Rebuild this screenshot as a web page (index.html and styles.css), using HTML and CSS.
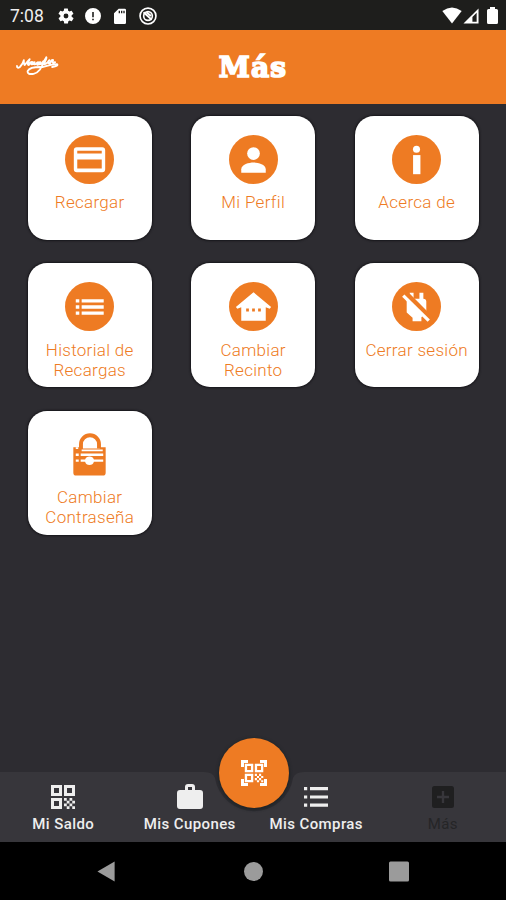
FILE: index.html
```html
<!DOCTYPE html>
<html lang="es">
<head>
<meta charset="utf-8">
<title>Más</title>
<link rel="stylesheet" href="styles.css">
</head>
<body>
<div class="phone">
  <div class="status">
    <span class="time">7:08</span>
    <svg class="s-icon" viewBox="1.500 1.500 21 21"><path fill-rule="evenodd" d="M19.4 13a7.500 7.500 0 0 0 0-2l2.100-1.600a.5.5 0 0 0 .1-.6l-2-3.500a.5.5 0 0 0-.6-.2l-2.500 1a7 7 0 0 0-1.700-1L14.500 2.400a.5.5 0 0 0-.5-.4h-4a.5.5 0 0 0-.5.4l-.4 2.700a7 7 0 0 0-1.700 1l-2.500-1a.5.5 0 0 0-.6.2l-2 3.500a.5.5 0 0 0 .1.6L4.600 11a7.500 7.500 0 0 0 0 2l-2.100 1.600a.5.5 0 0 0-.1.6l2 3.500c.1.200.4.300.6.200l2.500-1a7 7 0 0 0 1.700 1l.4 2.700c0 .2.200.4.500.4h4c.2 0 .5-.2.500-.4l.4-2.700a7 7 0 0 0 1.700-1l2.500 1c.2.100.5 0 .6-.2l2-3.500a.5.5 0 0 0-.1-.6zM12 15.200a3.200 3.200 0 1 1 0-6.400 3.200 3.200 0 0 1 0 6.400z"/></svg>
    <svg class="s-icon" viewBox="0 0 24 24"><path fill-rule="evenodd" d="M12 0a12 12 0 1 0 0 24 12 12 0 0 0 0-24zM10.800 6h2.400v8h-2.400zm0 10h2.400v2.400h-2.400z"/></svg>
    <svg class="s-icon" viewBox="0 0 24 24"><path fill-rule="evenodd" d="M21 1H10L3 8v14q0 2 2 2h14q2 0 2-2V3q0-2-2-2zM10 4h2v4h-2zm3.500 0h2v4h-2zM17 4h2v4h-2z"/></svg>
    <svg class="s-icon wide" viewBox="0 0 24 24" fill="none" stroke="#fff"><circle cx="12" cy="12" r="10.600" stroke-width="2.200"/><circle cx="12" cy="12" r="5.800" stroke-width="2.200"/><path d="M6 7l11 10M10 7l6 5" stroke-width="2.400"/></svg>
    <span class="spacer"></span>
    <svg class="wifi" viewBox="0 0 20 17"><path d="M.3 4Q10-3.200 19.700 4L10 16.500z"/></svg>
    <svg class="signal" viewBox="0 0 17 17"><path fill-rule="evenodd" d="M.5 16.500L16.500.5v16zM10 9.500v5h4.500V5z"/></svg>
    <svg class="battery" viewBox="0 0 11 17"><path d="M3 0h5v2h1.500Q11 2 11 3.500v12q0 1.500-1.500 1.500h-8Q0 17 0 15.500v-12Q0 2 1.500 2H3z"/></svg>
  </div>

  <header class="header">
    <svg class="brand" viewBox="0 0 44 22"><path d="M1 10Q1 13 4 11Q7 8 8 4Q8 9 9 9Q12 5 14 3Q11 9 13 9Q15 5 17 6Q14 9 17 8L19 6Q17 9 20 8Q24 4 22 8Q21 10 25 7M25 6Q21 6 23 8Q26 9 28 5Q26 16 18 18Q11 19 12 15Q14 11 25 11M28 8Q32 2 31 1Q28 5 29 8Q32 8 34 4Q32 8 35 7Q36 3 38 4Q36 8 40 6M27 11Q37 8 42 8Q44 10 37 11"/></svg>
    <h1>Más</h1>
  </header>

  <main class="grid">
    <section class="card">
      <svg class="icon" viewBox="0 0 50 50"><circle class="disc" cx="25" cy="25" r="25"/><path class="w" fill-rule="evenodd" d="M12 12.500h26q3 0 3 3v19.500q0 3-3 3H12q-3 0-3-3V15.500q0-3 3-3zM12.500 16v3h25v-3zm0 9v9.300h25V25z"/></svg>
      <p>Recargar</p>
    </section>
    <section class="card">
      <svg class="icon" viewBox="0 0 50 50"><circle class="disc" cx="25" cy="25" r="25"/><circle class="w" cx="25" cy="19" r="6.500"/><path class="w" d="M12.500 38.500v-3.600C12.500 30 20.500 28 25 28s12.500 2 12.500 6.900v3.600z"/></svg>
      <p>Mi Perfil</p>
    </section>
    <section class="card">
      <svg class="icon" viewBox="0 0 50 50"><circle class="disc" cx="25" cy="25" r="25"/><circle class="w" cx="25" cy="14.500" r="3.600"/><path class="w" d="M21.500 20.500h7.500v19.500h-7.500z"/></svg>
      <p>Acerca de</p>
    </section>
    <section class="card">
      <svg class="icon" viewBox="0 0 50 50"><circle class="disc" cx="25" cy="25" r="25"/><path class="w" d="M11 17.500h3.600v3.500H11zm6 0h22.500v3.500H17zM11 23.700h3.600v3.500H11zm6 0h22.500v3.500H17zM11 30h3.600v3.500H11zm6 0h22.500v3.500H17z"/></svg>
      <p>Historial de Recargas</p>
    </section>
    <section class="card">
      <svg class="icon" viewBox="0 0 50 50"><circle class="disc" cx="25" cy="25" r="25"/><path class="w" d="M25 10.500L43 25.500l-1.500 1.700-4-1.500V39.500h-25V25.700l-4 1.500L7 25.500z"/><path class="o" d="M17.500 27h2.800v3h-2.800zm6.100 0h2.800v3h-2.800zm6.100 0h2.800v3h-2.800z"/></svg>
      <p>Cambiar Recinto</p>
    </section>
    <section class="card">
      <svg class="icon" viewBox="0 0 50 50"><circle class="disc" cx="25" cy="25" r="25"/><path class="w" d="M18 11h4v6h6v-6h4v6q3 0 3 3v11l-5 5V40h-9v-3.500L15 31V18h3z"/><path d="M14 12L40 38" stroke="#ee7b23" stroke-width="6"/><path d="M11.500 14L37.500 39.500" stroke="#fff" stroke-width="3.300"/></svg>
      <p>Cerrar sesión</p>
    </section>
    <section class="card">
      <svg class="icon" viewBox="0 0 50 50"><path d="M16.300 21V14.500a9.200 9.200 0 0 1 18.400 0V19" fill="none" stroke="#ee7b23" stroke-width="4"/><path class="o" d="M8.500 17.500h6V19h21v-1.500h6V43.500q0 3-3 3h-27q-3 0-3-3z"/><path class="w" d="M11 17.500h2.500v2H11zm6 2.300h21.500v2H17zM11 24h3v2.500h-3zm5 0h23v2.500H16zM11 30h3v2.500h-3zm5 0h4.500q1-3 4.500-3t4.500 3H39v2.500h-9.500q-1 3.300-4.500 3.300t-4.500-3.300H16z"/></svg>
      <p>Cambiar Contraseña</p>
    </section>
  </main>

  <nav class="nav">
    <svg class="nav-bg" viewBox="0 0 506 70"><path d="M0 0H204Q213 0 215 6A39.500 39.500 0 0 0 293 6Q295 0 304 0H506V70H0z"/></svg>
    <a class="tab">
      <svg viewBox="0 0 24 24"><g id="qr"><path fill-rule="evenodd" d="M0 0h11v11H0zm3 3v5h5V3zM13 0h11v11H13zm3 3v5h5V3zM0 13h11v11H0zm3 3v5h5v-5z"/><path d="M13 13h2.750v2.750H13zm5.500 0h2.750v2.750H18.500zm-2.750 2.750h2.750v2.750h-2.750zm5.500 0H24v2.750h-2.750zM13 18.500h2.750v2.750H13zm5.500 0h2.750v2.750H18.500zm-2.750 2.750h2.750V24h-2.750zm5.500 0H24V24h-2.750z"/></g></svg>
      <span>Mi Saldo</span>
    </a>
    <a class="tab">
      <svg class="bag" viewBox="0 0 26 26"><path fill-rule="evenodd" d="M8 6V3q0-3 3-3h4q3 0 3 3v3h5q3 0 3 3v13q0 3-3 3H3q-3 0-3-3V9q0-3 3-3zm3 0h4V3h-4z"/></svg>
      <span>Mis Cupones</span>
    </a>
    <a class="tab">
      <svg viewBox="0 0 24 24"><path d="M0 2h3.200v3.200H0zm6 0h18v3.200H6zM0 10.400h3.200v3.200H0zm6 0h18v3.200H6zM0 18.500h3.200v3.200H0zm6 0h18v3.200H6z"/></svg>
      <span>Mis Compras</span>
    </a>
    <a class="tab active">
      <svg viewBox="0 0 24 24"><path fill-rule="evenodd" d="M3.500 1h17q2.500 0 2.500 2.500v17q0 2.500-2.500 2.500h-17Q1 23 1 20.500v-17Q1 1 3.500 1zM10.800 6v4.800H6v2.400h4.800V18h2.400v-4.800H18v-2.400h-4.800V6z"/></svg>
      <span>Más</span>
    </a>
    <div class="fab"><svg viewBox="0 0 26 26"><path d="M0 0h7v3H3v4H0zM19 0h7v7h-3V3h-4zM0 19h3v4h4v3H0zM23 19h3v7h-7v-3h4z"/><use href="#qr" transform="translate(3.800 3.800) scale(.77)"/></svg></div>
  </nav>

  <div class="system">
    <svg viewBox="0 0 20 22"><path d="M0 11L18 .5v21z"/></svg>
    <svg viewBox="0 0 20 20"><circle cx="10.500" cy="10" r="9.500"/></svg>
    <svg viewBox="0 0 20 20"><rect width="20" height="20" rx="1.500"/></svg>
  </div>
</div>
</body>
</html>
```
FILE: styles.css
```css
* { box-sizing: border-box; }
body { margin: 0; font-family: Roboto, sans-serif; }
svg { display: block; flex: none; }

.phone {
  width: 506px;
  height: 900px;
  display: flex;
  flex-direction: column;
  overflow: hidden;
  background: #2d2c31;
}

.status {
  height: 30px;
  flex: none;
  display: flex;
  align-items: center;
  padding: 1px 8px 0 10px;
  background: #1e1e1c;
  color: #fff;
  fill: #fff;
}
.time { width: 48px; font-size: 17.500px; line-height: 28px; color: #eee; }
.s-icon { width: 16px; height: 16px; margin-right: 11px; }
.s-icon.wide { width: 18px; height: 18px; margin: 0; }
.spacer { flex: 1; }
.wifi { width: 20px; height: 17px; margin-right: 1px; }
.signal { width: 16px; height: 16px; margin-right: 8px; }
.battery { width: 11px; height: 17px; }

.header {
  height: 74px;
  flex: none;
  display: grid;
  grid-template-columns: 60px 1fr 60px;
  align-items: center;
  background: #ee7b23;
}
.brand {
  width: 43px;
  height: 22px;
  margin-left: 16px;
  fill: none;
  stroke: #fff;
  stroke-width: 1.900;
  stroke-linecap: round;
  stroke-linejoin: round;
}
.header h1 {
  margin: 2px 0 0;
  text-align: center;
  color: #fff;
  font: bold 28px/40px "DejaVu Serif", serif;
  letter-spacing: 1.200px;
  -webkit-text-stroke: 1.700px #fff;
}

.grid {
  flex: 1;
  display: grid;
  grid-template-columns: repeat(3, 124px);
  grid-auto-rows: 124px;
  align-content: start;
  gap: 23.700px 39.500px;
  padding: 11.600px 0 0 27.700px;
}
.card {
  display: flex;
  flex-direction: column;
  align-items: center;
  padding: 19px 8px 0;
  border-radius: 19px;
  background: #fff;
  box-shadow: 0 0 2px 1px #17161a;
}
.icon { width: 49px; height: 49px; }
.disc, .o { fill: #ee7b23; }
.w { fill: #fff; }
.card p {
  margin: 8.500px 0 0;
  text-align: center;
  color: #ee7b23;
  font-size: 17px;
  font-weight: 350;
  line-height: 20px;
  letter-spacing: .3px;
}

.nav {
  position: relative;
  height: 70px;
  flex: none;
  display: grid;
  grid-template-columns: repeat(4, 1fr);
}
.nav-bg { position: absolute; inset: 0; width: 506px; height: 70px; fill: #37363b; }
.tab {
  position: relative;
  display: flex;
  flex-direction: column;
  align-items: center;
  padding-top: 13px;
  fill: #eee;
  color: #eee;
}
.tab svg { width: 24px; height: 24px; }
.tab .bag { width: 26px; height: 26px; margin: -1px 0; }
.tab span {
  margin-top: 5px;
  font-size: 15px;
  font-weight: 500;
  line-height: 20px;
  letter-spacing: .4px;
  white-space: nowrap;
}
.tab.active { fill: #1f1f20; color: #252527; }
.tab.active span { font-weight: 400; }
.fab {
  position: absolute;
  left: 219px;
  top: -34px;
  width: 70px;
  height: 70px;
  display: grid;
  place-items: center;
  border-radius: 50%;
  background: #ee7b23;
  box-shadow: 0 1px 3px 1px #1e2427;
}
.fab svg { width: 26px; height: 26px; fill: #fff; }

.system {
  height: 58px;
  flex: none;
  display: flex;
  justify-content: space-between;
  align-items: center;
  padding: 0 97px;
  background: #000;
  fill: #9b9b9b;
}
.system svg { width: 20px; height: 21px; }
```
